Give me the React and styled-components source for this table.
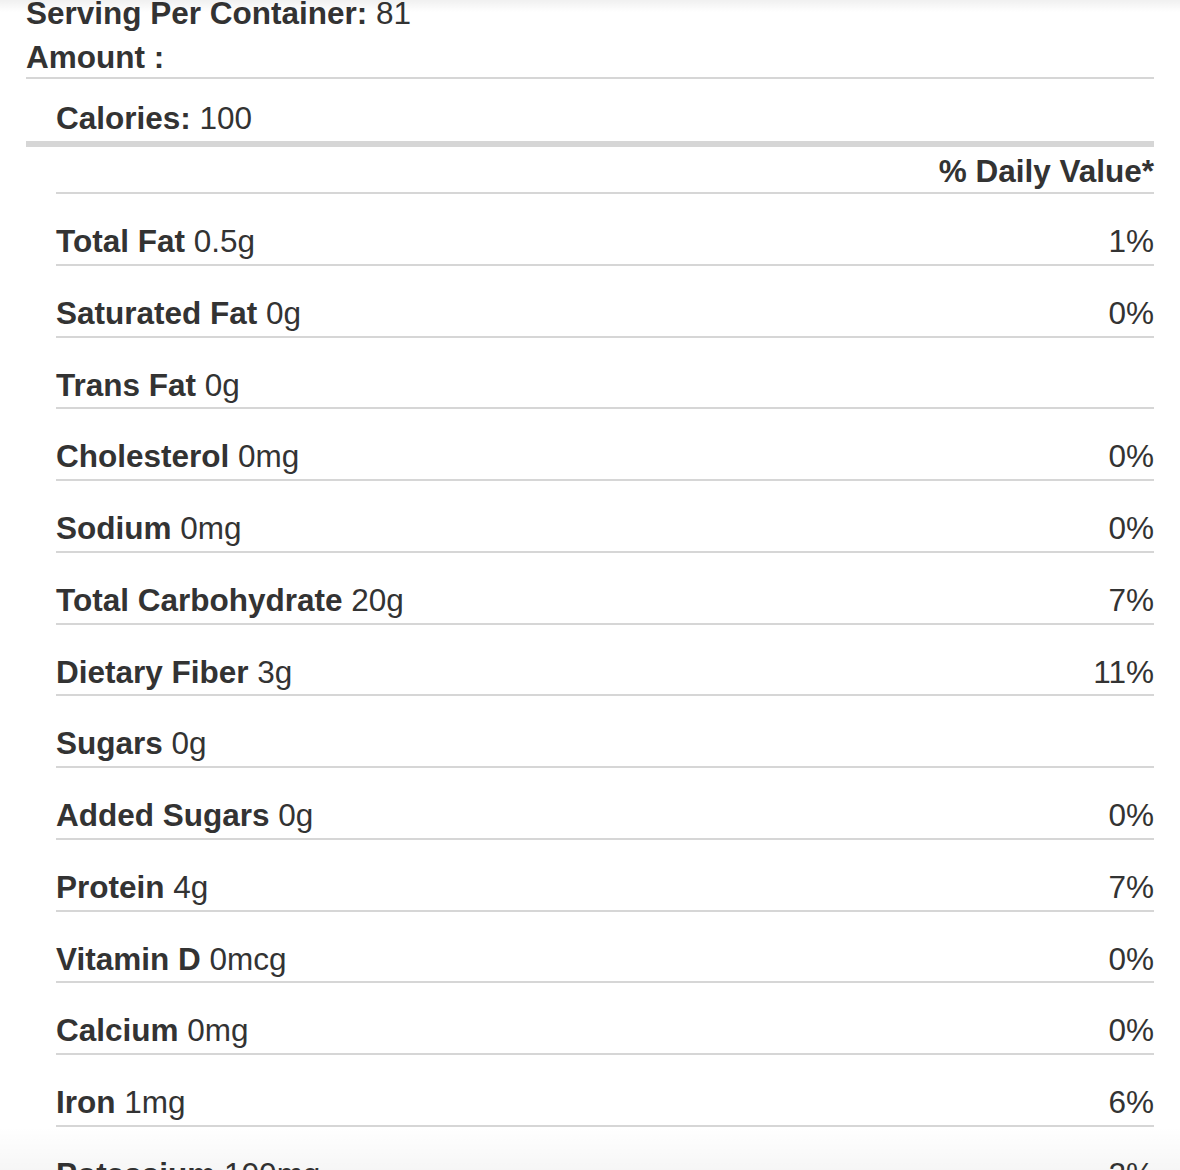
import React from 'react'
import styled, { createGlobalStyle } from 'styled-components'

const nutrients = [
  { name: 'Total Fat', amount: '0.5g', dv: '1%' },
  { name: 'Saturated Fat', amount: '0g', dv: '0%' },
  { name: 'Trans Fat', amount: '0g', dv: '' },
  { name: 'Cholesterol', amount: '0mg', dv: '0%' },
  { name: 'Sodium', amount: '0mg', dv: '0%' },
  { name: 'Total Carbohydrate', amount: '20g', dv: '7%' },
  { name: 'Dietary Fiber', amount: '3g', dv: '11%' },
  { name: 'Sugars', amount: '0g', dv: '' },
  { name: 'Added Sugars', amount: '0g', dv: '0%' },
  { name: 'Protein', amount: '4g', dv: '7%' },
  { name: 'Vitamin D', amount: '0mcg', dv: '0%' },
  { name: 'Calcium', amount: '0mg', dv: '0%' },
  { name: 'Iron', amount: '1mg', dv: '6%' },
  { name: 'Potassium', amount: '100mg', dv: '2%' },
]

export default function App() {
  return (
    <>
      <GlobalStyle />
      <Viewport>
        <Label>
          <Header>
            <ServingLine><b>Serving Per Container:</b> 81</ServingLine>
            <AmountLine><b>Amount :</b></AmountLine>
          </Header>
          <CaloriesRow><b>Calories:</b> 100</CaloriesRow>
          <DailyHead>% Daily Value*</DailyHead>
          {nutrients.map((n, i) => (
            <Row key={i}>
              <span><b>{n.name}</b> {n.amount}</span>
              <span>{n.dv}</span>
            </Row>
          ))}
        </Label>
      </Viewport>
    </>
  )
}

const GlobalStyle = createGlobalStyle`
  html, body {
    margin: 0;
    padding: 0;
    background: #fff;
  }
  body {
    font-family: "Liberation Sans", Arial, Helvetica, sans-serif;
    color: #333;
  }
  b {
    font-weight: 700;
  }
`

const Viewport = styled.div`
  position: relative;
  height: 1170px;
  overflow: hidden;
  &::before {
    content: '';
    position: absolute;
    left: 0;
    right: 0;
    top: 0;
    height: 12px;
    background: linear-gradient(to bottom, rgba(0,0,0,0.06), rgba(0,0,0,0));
    pointer-events: none;
  }
  &::after {
    content: '';
    position: absolute;
    left: 0;
    right: 0;
    top: 1127px;
    bottom: 0;
    background: linear-gradient(to bottom, rgba(0,0,0,0), rgba(0,0,0,0.035));
    pointer-events: none;
  }
`

const Label = styled.div`
  padding: 0 26px;
  font-size: 31.5px;
  line-height: 36px;
`

const Header = styled.div`
  padding-bottom: 2px;
  border-bottom: 2px solid #d6d6d6;
`

const ServingLine = styled.div`
  line-height: 26px;
`

const AmountLine = styled.div`
  margin-top: 13px;
`

const CaloriesRow = styled.div`
  padding: 21px 0 5px 30px;
  border-bottom: 6px solid #d6d6d6;
`

const DailyHead = styled.div`
  margin-left: 30px;
  padding: 6px 0 3px;
  text-align: right;
  font-weight: 700;
  border-bottom: 2px solid #d6d6d6;
`

const Row = styled.div`
  display: flex;
  justify-content: space-between;
  margin-left: 30px;
  padding: 29px 0 4.75px;
  border-bottom: 2px solid #d6d6d6;
  white-space: nowrap;
`
